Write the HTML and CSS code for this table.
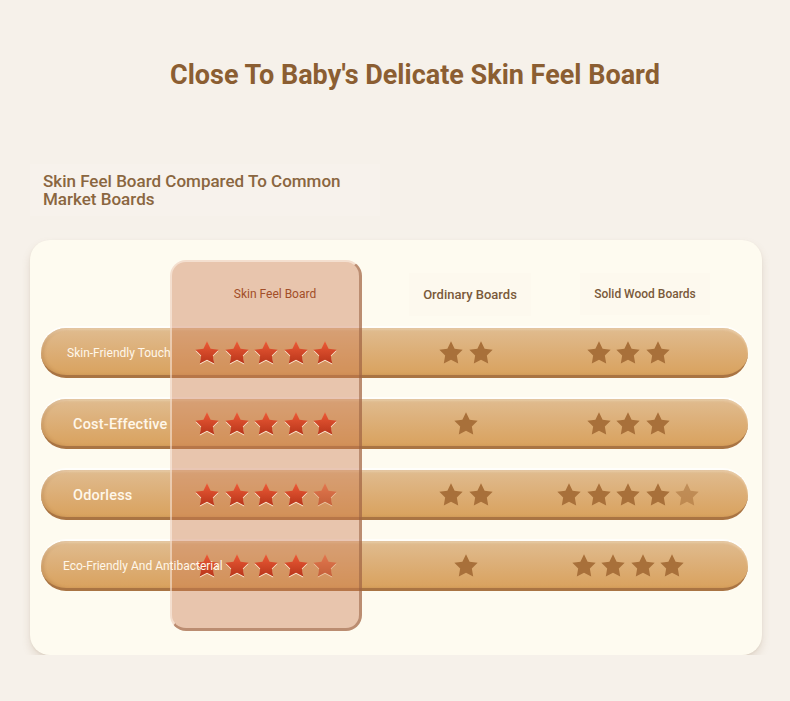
FILE: index.html
```html
<!DOCTYPE html>
<html lang="en">
<head>
<meta charset="utf-8">
<title>Skin Feel Board</title>
<link rel="stylesheet" href="styles.css">
</head>
<body>
<h1 class="title">Close To Baby's Delicate Skin Feel Board</h1>
<div class="subtitle-box"><h2 class="subtitle">Skin Feel Board Compared To Common Market Boards</h2></div>

<section class="card">
  <div class="highlight"></div>
  <div class="head">
    <div></div>
    <div class="hcell hl">Skin Feel Board</div>
    <div class="hcell"><span class="hbox ord">Ordinary Boards</span></div>
    <div class="hcell"><span class="hbox">Solid Wood Boards</span></div>
  </div>

  <div class="rows">
    <div class="pill">
      <div class="label sm p26">Skin-Friendly Touch</div>
      <div class="stars"><svg class="star red" viewBox="0 0 24 24"><path d="M12 2l3.09 6.26L22 9.27l-5 4.87 1.18 6.88L12 17.77l-6.18 3.25L7 14.14 2 9.27l6.91-1.01z"/></svg><svg class="star red" viewBox="0 0 24 24"><path d="M12 2l3.09 6.26L22 9.27l-5 4.87 1.18 6.88L12 17.77l-6.18 3.25L7 14.14 2 9.27l6.91-1.01z"/></svg><svg class="star red" viewBox="0 0 24 24"><path d="M12 2l3.09 6.26L22 9.27l-5 4.87 1.18 6.88L12 17.77l-6.18 3.25L7 14.14 2 9.27l6.91-1.01z"/></svg><svg class="star red" viewBox="0 0 24 24"><path d="M12 2l3.09 6.26L22 9.27l-5 4.87 1.18 6.88L12 17.77l-6.18 3.25L7 14.14 2 9.27l6.91-1.01z"/></svg><svg class="star red" viewBox="0 0 24 24"><path d="M12 2l3.09 6.26L22 9.27l-5 4.87 1.18 6.88L12 17.77l-6.18 3.25L7 14.14 2 9.27l6.91-1.01z"/></svg></div>
      <div class="stars"><svg class="star brown" viewBox="0 0 24 24"><path d="M12 2l3.09 6.26L22 9.27l-5 4.87 1.18 6.88L12 17.77l-6.18 3.25L7 14.14 2 9.27l6.91-1.01z"/></svg><svg class="star brown" viewBox="0 0 24 24"><path d="M12 2l3.09 6.26L22 9.27l-5 4.87 1.18 6.88L12 17.77l-6.18 3.25L7 14.14 2 9.27l6.91-1.01z"/></svg></div>
      <div class="stars"><svg class="star brown" viewBox="0 0 24 24"><path d="M12 2l3.09 6.26L22 9.27l-5 4.87 1.18 6.88L12 17.77l-6.18 3.25L7 14.14 2 9.27l6.91-1.01z"/></svg><svg class="star brown" viewBox="0 0 24 24"><path d="M12 2l3.09 6.26L22 9.27l-5 4.87 1.18 6.88L12 17.77l-6.18 3.25L7 14.14 2 9.27l6.91-1.01z"/></svg><svg class="star brown" viewBox="0 0 24 24"><path d="M12 2l3.09 6.26L22 9.27l-5 4.87 1.18 6.88L12 17.77l-6.18 3.25L7 14.14 2 9.27l6.91-1.01z"/></svg></div>
    </div>

    <div class="pill">
      <div class="label md p32">Cost-Effective</div>
      <div class="stars"><svg class="star red" viewBox="0 0 24 24"><path d="M12 2l3.09 6.26L22 9.27l-5 4.87 1.18 6.88L12 17.77l-6.18 3.25L7 14.14 2 9.27l6.91-1.01z"/></svg><svg class="star red" viewBox="0 0 24 24"><path d="M12 2l3.09 6.26L22 9.27l-5 4.87 1.18 6.88L12 17.77l-6.18 3.25L7 14.14 2 9.27l6.91-1.01z"/></svg><svg class="star red" viewBox="0 0 24 24"><path d="M12 2l3.09 6.26L22 9.27l-5 4.87 1.18 6.88L12 17.77l-6.18 3.25L7 14.14 2 9.27l6.91-1.01z"/></svg><svg class="star red" viewBox="0 0 24 24"><path d="M12 2l3.09 6.26L22 9.27l-5 4.87 1.18 6.88L12 17.77l-6.18 3.25L7 14.14 2 9.27l6.91-1.01z"/></svg><svg class="star red" viewBox="0 0 24 24"><path d="M12 2l3.09 6.26L22 9.27l-5 4.87 1.18 6.88L12 17.77l-6.18 3.25L7 14.14 2 9.27l6.91-1.01z"/></svg></div>
      <div class="stars"><svg class="star brown" viewBox="0 0 24 24"><path d="M12 2l3.09 6.26L22 9.27l-5 4.87 1.18 6.88L12 17.77l-6.18 3.25L7 14.14 2 9.27l6.91-1.01z"/></svg></div>
      <div class="stars"><svg class="star brown" viewBox="0 0 24 24"><path d="M12 2l3.09 6.26L22 9.27l-5 4.87 1.18 6.88L12 17.77l-6.18 3.25L7 14.14 2 9.27l6.91-1.01z"/></svg><svg class="star brown" viewBox="0 0 24 24"><path d="M12 2l3.09 6.26L22 9.27l-5 4.87 1.18 6.88L12 17.77l-6.18 3.25L7 14.14 2 9.27l6.91-1.01z"/></svg><svg class="star brown" viewBox="0 0 24 24"><path d="M12 2l3.09 6.26L22 9.27l-5 4.87 1.18 6.88L12 17.77l-6.18 3.25L7 14.14 2 9.27l6.91-1.01z"/></svg></div>
    </div>

    <div class="pill">
      <div class="label md p32">Odorless</div>
      <div class="stars"><svg class="star red" viewBox="0 0 24 24"><path d="M12 2l3.09 6.26L22 9.27l-5 4.87 1.18 6.88L12 17.77l-6.18 3.25L7 14.14 2 9.27l6.91-1.01z"/></svg><svg class="star red" viewBox="0 0 24 24"><path d="M12 2l3.09 6.26L22 9.27l-5 4.87 1.18 6.88L12 17.77l-6.18 3.25L7 14.14 2 9.27l6.91-1.01z"/></svg><svg class="star red" viewBox="0 0 24 24"><path d="M12 2l3.09 6.26L22 9.27l-5 4.87 1.18 6.88L12 17.77l-6.18 3.25L7 14.14 2 9.27l6.91-1.01z"/></svg><svg class="star red" viewBox="0 0 24 24"><path d="M12 2l3.09 6.26L22 9.27l-5 4.87 1.18 6.88L12 17.77l-6.18 3.25L7 14.14 2 9.27l6.91-1.01z"/></svg><svg class="star red faded" viewBox="0 0 24 24"><path d="M12 2l3.09 6.26L22 9.27l-5 4.87 1.18 6.88L12 17.77l-6.18 3.25L7 14.14 2 9.27l6.91-1.01z"/></svg></div>
      <div class="stars"><svg class="star brown" viewBox="0 0 24 24"><path d="M12 2l3.09 6.26L22 9.27l-5 4.87 1.18 6.88L12 17.77l-6.18 3.25L7 14.14 2 9.27l6.91-1.01z"/></svg><svg class="star brown" viewBox="0 0 24 24"><path d="M12 2l3.09 6.26L22 9.27l-5 4.87 1.18 6.88L12 17.77l-6.18 3.25L7 14.14 2 9.27l6.91-1.01z"/></svg></div>
      <div class="stars"><svg class="star brown" viewBox="0 0 24 24"><path d="M12 2l3.09 6.26L22 9.27l-5 4.87 1.18 6.88L12 17.77l-6.18 3.25L7 14.14 2 9.27l6.91-1.01z"/></svg><svg class="star brown" viewBox="0 0 24 24"><path d="M12 2l3.09 6.26L22 9.27l-5 4.87 1.18 6.88L12 17.77l-6.18 3.25L7 14.14 2 9.27l6.91-1.01z"/></svg><svg class="star brown" viewBox="0 0 24 24"><path d="M12 2l3.09 6.26L22 9.27l-5 4.87 1.18 6.88L12 17.77l-6.18 3.25L7 14.14 2 9.27l6.91-1.01z"/></svg><svg class="star brown" viewBox="0 0 24 24"><path d="M12 2l3.09 6.26L22 9.27l-5 4.87 1.18 6.88L12 17.77l-6.18 3.25L7 14.14 2 9.27l6.91-1.01z"/></svg><svg class="star brown faded" viewBox="0 0 24 24"><path d="M12 2l3.09 6.26L22 9.27l-5 4.87 1.18 6.88L12 17.77l-6.18 3.25L7 14.14 2 9.27l6.91-1.01z"/></svg></div>
    </div>

    <div class="pill">
      <div class="label sm p22">Eco-Friendly And Antibacterial</div>
      <div class="stars"><svg class="star red" viewBox="0 0 24 24"><path d="M12 2l3.09 6.26L22 9.27l-5 4.87 1.18 6.88L12 17.77l-6.18 3.25L7 14.14 2 9.27l6.91-1.01z"/></svg><svg class="star red" viewBox="0 0 24 24"><path d="M12 2l3.09 6.26L22 9.27l-5 4.87 1.18 6.88L12 17.77l-6.18 3.25L7 14.14 2 9.27l6.91-1.01z"/></svg><svg class="star red" viewBox="0 0 24 24"><path d="M12 2l3.09 6.26L22 9.27l-5 4.87 1.18 6.88L12 17.77l-6.18 3.25L7 14.14 2 9.27l6.91-1.01z"/></svg><svg class="star red" viewBox="0 0 24 24"><path d="M12 2l3.09 6.26L22 9.27l-5 4.87 1.18 6.88L12 17.77l-6.18 3.25L7 14.14 2 9.27l6.91-1.01z"/></svg><svg class="star red faded" viewBox="0 0 24 24"><path d="M12 2l3.09 6.26L22 9.27l-5 4.87 1.18 6.88L12 17.77l-6.18 3.25L7 14.14 2 9.27l6.91-1.01z"/></svg></div>
      <div class="stars"><svg class="star brown" viewBox="0 0 24 24"><path d="M12 2l3.09 6.26L22 9.27l-5 4.87 1.18 6.88L12 17.77l-6.18 3.25L7 14.14 2 9.27l6.91-1.01z"/></svg></div>
      <div class="stars"><svg class="star brown" viewBox="0 0 24 24"><path d="M12 2l3.09 6.26L22 9.27l-5 4.87 1.18 6.88L12 17.77l-6.18 3.25L7 14.14 2 9.27l6.91-1.01z"/></svg><svg class="star brown" viewBox="0 0 24 24"><path d="M12 2l3.09 6.26L22 9.27l-5 4.87 1.18 6.88L12 17.77l-6.18 3.25L7 14.14 2 9.27l6.91-1.01z"/></svg><svg class="star brown" viewBox="0 0 24 24"><path d="M12 2l3.09 6.26L22 9.27l-5 4.87 1.18 6.88L12 17.77l-6.18 3.25L7 14.14 2 9.27l6.91-1.01z"/></svg><svg class="star brown" viewBox="0 0 24 24"><path d="M12 2l3.09 6.26L22 9.27l-5 4.87 1.18 6.88L12 17.77l-6.18 3.25L7 14.14 2 9.27l6.91-1.01z"/></svg></div>
    </div>
  </div>
</section>

<svg class="defs" width="0" height="0" aria-hidden="true">
  <defs>
    <linearGradient id="rg" x1="0" y1="0" x2="0" y2="1">
      <stop offset="0" stop-color="#ec5a36"/>
      <stop offset="1" stop-color="#b8351a"/>
    </linearGradient>
  </defs>
</svg>
</body>
</html>
```

FILE: styles.css
```css
* { box-sizing: border-box; }

html, body {
  margin: 0;
  padding: 0;
  background: #f6f1ea;
  font-family: Roboto, "Liberation Sans", Arial, sans-serif;
}

.title {
  margin: 0;
  padding: 60px 0 0 40px;
  text-align: center;
  font-size: 27px;
  line-height: 30px;
  font-weight: 700;
  color: #8b5e32;
}

.subtitle-box {
  margin: 74px 0 0 30px;
  width: 350px;
  padding: 8px 13px;
  background: rgba(255, 255, 255, 0.1);
}

.subtitle {
  margin: 0;
  max-width: 330px;
  font-size: 17px;
  line-height: 18px;
  font-weight: 500;
  color: #8a6640;
}

.card {
  position: relative;
  margin: 24px 28px 0 30px;
  padding: 20px 14px 64px 11px;
  background: #fefbf0;
  border-radius: 20px;
  box-shadow: 0 5px 8px rgba(150, 120, 90, 0.2), 0 1px 2px rgba(150, 120, 90, 0.1);
}

.highlight {
  position: absolute;
  left: 140px;
  top: 20px;
  width: 192px;
  height: 371px;
  border-radius: 16px;
  background: rgba(202, 122, 80, 0.42);
  border: 2px solid rgba(255, 250, 240, 0.5);
  border-right: 3px solid rgba(150, 95, 65, 0.55);
  border-bottom: 3px solid rgba(150, 95, 65, 0.55);
  z-index: 1;
}

.head {
  display: grid;
  grid-template-columns: 129px 192px 216px 134px 1fr;
  height: 58px;
  padding-top: 10px;
  margin-bottom: 10px;
  align-items: center;
}

.hcell {
  position: relative;
  z-index: 2;
  text-align: center;
  font-size: 12px;
  font-weight: 500;
  color: #7a5a3a;
}

.hcell.hl {
  padding-left: 18px;
  font-weight: 400;
  color: #a24e28;
}

.hbox {
  display: inline-block;
  padding: 14px 14px;
  background: rgba(246, 240, 228, 0.12);
}

.hbox.ord {
  font-size: 13px;
}

.rows {
  display: flex;
  flex-direction: column;
  gap: 21px;
}

.pill {
  display: grid;
  grid-template-columns: 129px 192px 208px 116px 1fr;
  align-items: center;
  height: 50px;
  padding-top: 3px;
  border-radius: 25px;
  background: linear-gradient(180deg, #e0bc90 0%, #dcad74 55%, #d9a25e 100%);
  border-bottom: 3px solid #a97443;
  box-shadow:
    0 -2px 0 rgba(255, 255, 255, 0.7),
    inset 3px 0 3px rgba(140, 85, 40, 0.18),
    inset 0 2px 2px rgba(255, 240, 220, 0.35);
}

.label {
  position: relative;
  z-index: 3;
  white-space: nowrap;
  color: #fff7ea;
}

.label.sm { font-size: 12px; }
.label.md { font-size: 14.5px; font-weight: 500; letter-spacing: 0.2px; }
.label.p26 { padding-left: 26px; }
.label.p32 { padding-left: 32px; }
.label.p22 { padding-left: 22px; }

.stars {
  position: relative;
  z-index: 2;
  display: flex;
  justify-content: center;
  gap: 1.5px;
}

.star {
  width: 28px;
  height: 28px;
  flex: none;
  display: block;
}

.star.red path {
  fill: url(#rg);
}

.star.red {
  filter: drop-shadow(0 1.5px 0 rgba(255, 236, 215, 0.95));
}

.star.brown path {
  fill: #a8703a;
}

.star.faded {
  opacity: 0.55;
}

.defs {
  display: block;
  width: 0;
  height: 0;
}
```
